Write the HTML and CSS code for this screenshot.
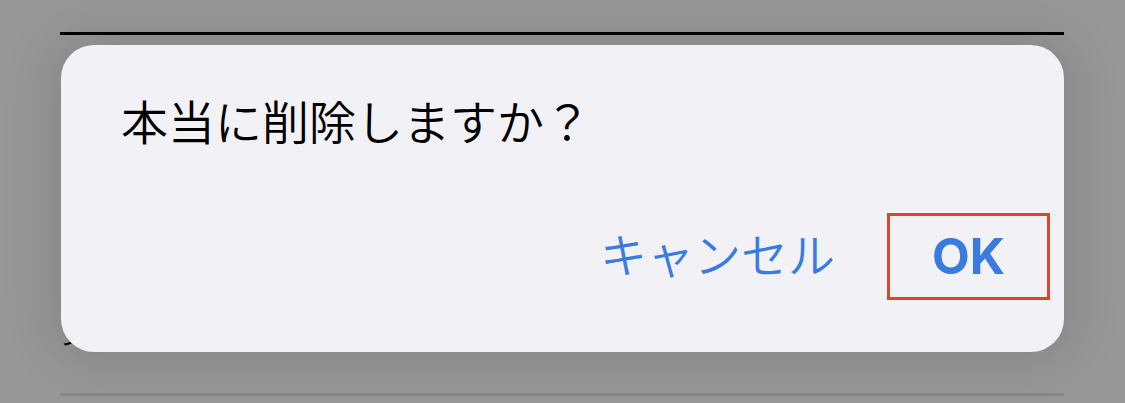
FILE: index.html
```html
<!DOCTYPE html>
<html lang="ja">
<head>
   <meta charset="UTF-8">
   <meta name="viewport" content="width=device-width, initial-scale=1.0">
   <title>削除の確認</title>
   <link rel="stylesheet" href="styles.css">
</head>
<body>
   <div class="page">
       <div class="backdrop">
           <div class="rule rule-dark"></div>
           <div class="row-behind">ン</div>
           <div class="rule rule-light"></div>
       </div>
       <div class="dialog">
           <p class="message">本当に削除しますか？</p>
           <div class="actions">
               <button class="btn btn-cancel">キャンセル</button>
               <button class="btn btn-ok">OK</button>
           </div>
       </div>
   </div>
</body>
</html>
```

FILE: styles.css
```css
body {
    margin: 0;
    background: #979797;
    font-family: "Noto Sans CJK JP", "Noto Sans", sans-serif;
    overflow: hidden;
}

.page {
    position: relative;
    width: 1125px;
    height: 403px;
}

.backdrop {
    display: flex;
    flex-direction: column;
    padding: 32px 61px 0 60px;
}

.rule {
    height: 3px;
}

.rule-dark {
    background: #000;
}

.rule-light {
    background: #888;
}

.row-behind {
    height: 360px;
    margin-top: -2px;
    padding-top: 288px;
    box-sizing: border-box;
    font-size: 26px;
    line-height: 1;
    color: #000;
}

.dialog {
    position: absolute;
    left: 61px;
    top: 45px;
    width: 1003px;
    height: 307px;
    background: #f1f1f6;
    border-radius: 33px;
    box-shadow: 0 0 50px 12px rgba(0, 0, 0, 0.1);
    display: flex;
    flex-direction: column;
}

.message {
    margin: 0;
    padding: 44px 0 0 60px;
    font-size: 47px;
    font-weight: 350;
    line-height: 62px;
    color: #000;
}

.actions {
    display: flex;
    justify-content: flex-end;
    align-items: center;
    gap: 52px;
    margin-top: 62px;
    padding-right: 14px;
}

.btn {
    font-family: inherit;
    background: none;
    border: none;
    padding: 0;
    color: #3a7be0;
    cursor: pointer;
}

.btn-cancel {
    font-size: 47px;
    font-weight: 350;
    line-height: 60px;
    padding-bottom: 8px;
}

.btn-ok {
    width: 163px;
    height: 87px;
    box-sizing: border-box;
    border: 3px solid #e0432c;
    font-family: "Inter", "Liberation Sans", sans-serif;
    font-weight: bold;
    font-size: 49px;
}
```
